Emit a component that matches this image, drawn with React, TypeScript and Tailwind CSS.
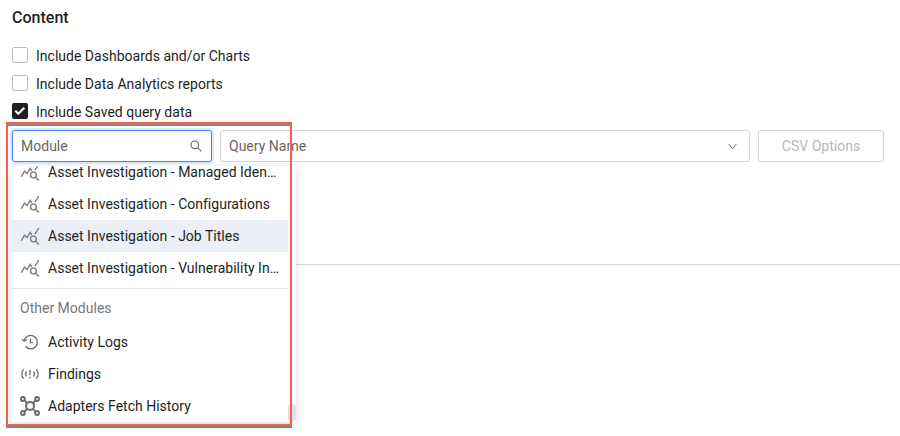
import type { ReactNode } from 'react';

function AssetIcon() {
  return (
    <svg className="shrink-0" width="20" height="20" viewBox="0 0 20 20" fill="none" stroke="#777" strokeWidth="1.3">
      <path d="M1.3 14.8 4.4 9.1 7 11.8 10.2 6.3 11.8 9.1M15 8.200 18.700 2.200" />
      <circle cx="13.400" cy="13" r="2.900" />
      <path d="m15.500 15.200 3.300 3.300" />
    </svg>
  );
}

function HistoryIcon() {
  return (
    <svg className="shrink-0" width="20" height="20" viewBox="0 0 20 20" fill="none" stroke="#6f6f6f" strokeWidth="1.3">
      <path d="M4.1 8.600A6.700 6.700 0 1 1 5.500 14.500" />
      <path d="M1.800 7.200 4.200 9.300 6.800 7.600" />
      <path d="M10.300 6.500v4.200h3" />
    </svg>
  );
}

function FindingsIcon() {
  return (
    <svg className="shrink-0" width="20" height="20" viewBox="0 0 20 20" fill="none" stroke="#6f6f6f" strokeWidth="1.3">
      <path d="M3.600 5.500C1.200 8 1.200 12 3.600 14.500M16.400 5.500c2.400 2.500 2.400 6.500 0 9M6.500 7.500c-1.200 1.500-1.200 3.500 0 5M13.500 7.500c1.200 1.500 1.200 3.500 0 5" />
      <path d="M10 6v5.200M10 12.800v1.400" />
    </svg>
  );
}

function AdaptersIcon() {
  return (
    <svg className="shrink-0" width="20" height="20" viewBox="0 0 20 20" fill="none" stroke="#6c6c6c" strokeWidth="2">
      <circle cx="10" cy="9.900" r="4" />
      <circle cx="2.900" cy="3" r="1.900" />
      <circle cx="17.100" cy="3" r="1.900" />
      <circle cx="2.900" cy="17" r="1.900" />
      <circle cx="17.100" cy="17" r="1.900" />
      <path d="m4.400 4.400 2.700 2.700M15.600 4.400l-2.700 2.700M4.400 15.600l2.700-2.800M15.600 15.600l-2.700-2.800" />
    </svg>
  );
}

function CheckRow({ label, checked = false }: { label: string; checked?: boolean }) {
  return (
    <label className="flex h-7 items-center gap-2">
      <span
        className={
          checked
            ? 'mb-0.5 flex size-4 items-center justify-center rounded-xs bg-[#1d1f23]'
            : 'mb-0.5 size-4 rounded-xs border border-[#b9b9b9] bg-white'
        }
      >
        {checked && (
          <svg width="12" height="12" viewBox="0 0 12 12" fill="none" stroke="white" strokeWidth="2">
            <path d="m1.300 5.800 3 3 6-6" />
          </svg>
        )}
      </span>
      <span>{label}</span>
    </label>
  );
}

function Option({ icon, label, active = false }: { icon: ReactNode; label: string; active?: boolean }) {
  return (
    <div className={active ? 'flex h-8 shrink-0 items-center gap-2 bg-[#eceff5] pl-2' : 'flex h-8 shrink-0 items-center gap-2 pl-2'}>
      {icon}
      <span className="whitespace-nowrap">{label}</span>
    </div>
  );
}

export default function App() {
  return (
    <main className="relative h-[436px] w-[900px] overflow-hidden bg-white font-['Roboto',sans-serif] text-sm tracking-[0.01px] text-[#1d1f23]">
      <div className="flex h-[264px] flex-col">
        <h1 className="h-[42px] px-3 pt-[6px] text-base leading-6 font-medium">Content</h1>
        <div className="px-3">
          <CheckRow label="Include Dashboards and/or Charts" />
          <CheckRow label="Include Data Analytics reports" />
          <CheckRow label="Include Saved query data" checked />
        </div>
        <div className="mt-1 flex gap-2 px-3 text-[#666]">
          <div className="flex h-8 w-[200px] items-center justify-between rounded-[3px] border border-[#4586f7] pr-[9px] pl-2 shadow-[0_0_0_2px_#dce9fd]">
            <span>Module</span>
            <svg width="12" height="12" viewBox="0 0 12 12" fill="none" stroke="#666" strokeWidth="1.1">
              <circle cx="4.800" cy="4.800" r="3.800" />
              <path d="m7.600 7.600 3.800 3.800" />
            </svg>
          </div>
          <div className="flex h-8 w-[530px] items-center justify-between rounded-[3px] border border-[#d5d5d5] pr-3 pl-2">
            <span>Query Name</span>
            <svg width="9" height="9" viewBox="0 0 9 9" fill="none" stroke="#666" strokeWidth="1">
              <path d="m.8 2.200 3.700 4.500 3.700-4.500" />
            </svg>
          </div>
          <button className="h-8 w-[126px] rounded-[3px] border border-[#d5d5d5] text-[#b8b8b8]" disabled>
            CSV Options
          </button>
        </div>
      </div>
      <div className="ml-[294px] h-px bg-[#d5d5d5]" />

      <div className="absolute top-[166px] left-3 flex h-64 w-[284px] flex-col justify-end overflow-hidden rounded-[3px] bg-white pr-2 shadow-[0_3px_6px_-4px_rgba(0,0,0,0.12),0_2px_12px_rgba(60,70,110,0.16)]">
        <Option icon={<AssetIcon />} label="Asset Investigation - Managed Iden…" />
        <Option icon={<AssetIcon />} label="Asset Investigation - Configurations" />
        <Option icon={<AssetIcon />} label="Asset Investigation - Job Titles" active />
        <Option icon={<AssetIcon />} label="Asset Investigation - Vulnerability In…" />
        <div className="mt-1 h-px shrink-0 bg-[#e3e3e3]" />
        <div className="mt-[3px] mb-[2px] flex h-8 shrink-0 items-center pl-2 text-[#777]">Other Modules</div>
        <Option icon={<HistoryIcon />} label="Activity Logs" />
        <Option icon={<FindingsIcon />} label="Findings" />
        <Option icon={<AdaptersIcon />} label="Adapters Fetch History" />
        <div className="absolute right-0 bottom-0 h-[18px] w-2 rounded-full bg-[#dde0ea]" />
      </div>

      <div className="pointer-events-none absolute top-[122px] left-[6px] h-[304px] w-[286px] border-2 border-[#fc5c4e] drop-shadow-[0px_2.5px_0.7px_rgba(0,0,0,0.48)]" />
    </main>
  );
}
